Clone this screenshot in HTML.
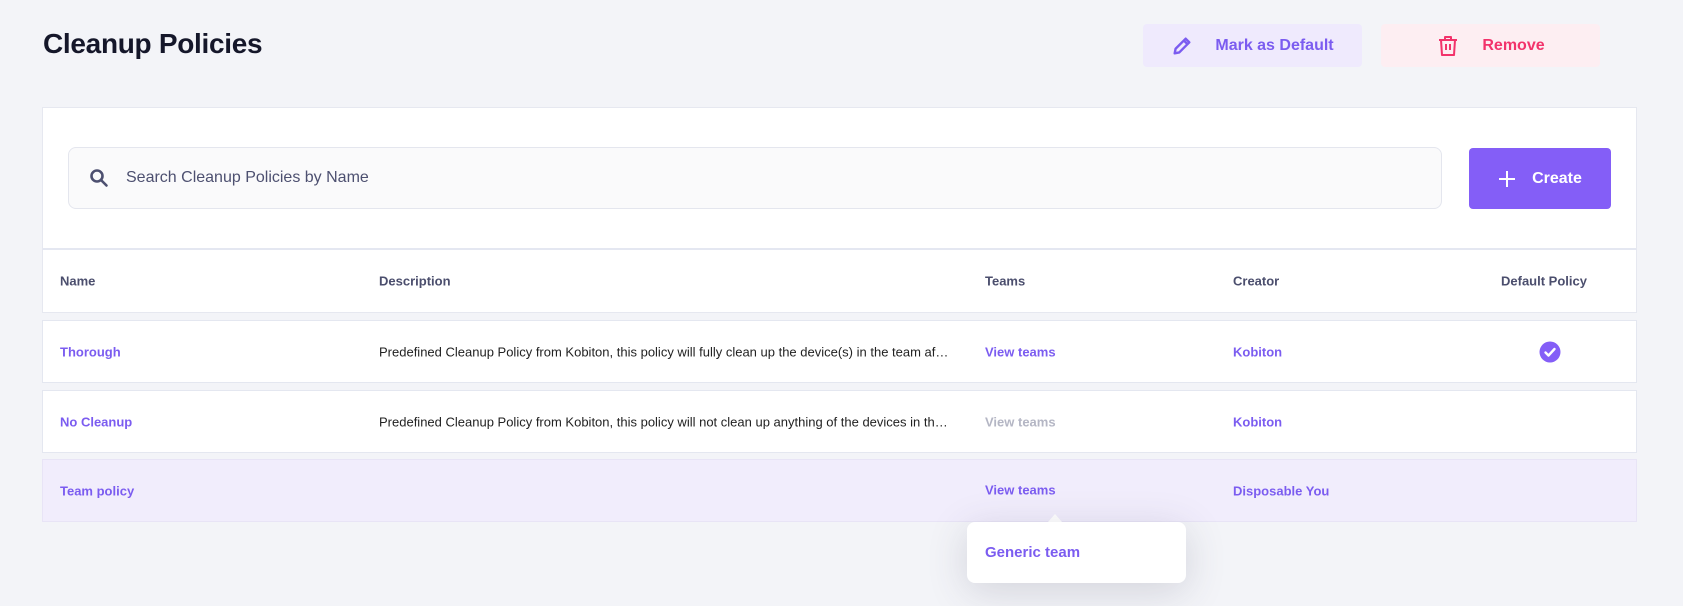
<!DOCTYPE html>
<html><head><meta charset="utf-8"><style>
*{box-sizing:border-box;margin:0;padding:0}
body{width:1683px;height:606px;background:#f3f4f8;font-family:"Liberation Sans",sans-serif;position:relative;overflow:hidden}
.abs{position:absolute}
h1{position:absolute;left:43px;top:28px;font-size:28px;font-weight:bold;color:#15172a;letter-spacing:-0.3px}
.btn{position:absolute;top:24px;height:43px;border-radius:4px;display:flex;align-items:center;justify-content:center;font-size:16px;font-weight:bold;gap:22px}
.card{position:absolute;left:42px;top:107px;width:1595px;height:143px;background:#fff;border:1px solid #e6e8f0;border-bottom:2px solid #e4e7f1}
.search{position:absolute;left:68px;top:147px;width:1374px;height:62px;background:#fafafb;border:1px solid #e4e6ee;border-radius:8px}
.search span{position:absolute;left:57px;top:21px;font-size:16px;color:#4d5070}
.create{position:absolute;left:1469px;top:148px;width:142px;height:61px;background:#845ef7;border-radius:4px;color:#fff;font-weight:bold;font-size:16px;display:flex;align-items:center;justify-content:center;gap:16px}
.hdr{position:absolute;left:42px;top:250px;width:1595px;height:63px;background:#fff;border:1px solid #e6e8f0;border-top:none}
.row{position:absolute;left:42px;width:1595px;height:63px;background:#fff;border:1px solid #e4e7f0}
.c{position:absolute;top:50%;transform:translateY(-50%);font-size:13px;white-space:nowrap}
.h{font-weight:bold;color:#4b4e6d}
.p{color:#7b5cf0;font-weight:bold}
.d{color:#222;width:570px;overflow:hidden;text-overflow:ellipsis}
</style></head><body>
<h1>Cleanup Policies</h1>
<div class="btn" style="left:1143px;width:219px;background:#efeafd;color:#7b5cf0">
<svg width="22" height="22" viewBox="0 0 24 24" fill="none" stroke="#7b5cf0" stroke-width="2.6" stroke-linejoin="round"><path d="M4 20l1-5L16 4l4 4L9 19z"/><path d="M14 6l4 4"/></svg>Mark as Default</div>
<div class="btn" style="left:1381px;width:219px;background:#fdeef2;color:#f2336b">
<svg width="24" height="24" viewBox="0 0 24 24" fill="none" stroke="#f2336b" stroke-width="2" stroke-linejoin="round"><path d="M3 6h18M9 6V3h6v3M5 6l1 15h12l1-15M10 10v6M14 10v6"/></svg>Remove</div>
<div class="card"></div>
<div class="search"><svg class="abs" style="left:20px;top:20px" width="20" height="20" viewBox="0 0 20 20" fill="none" stroke="#4d5070" stroke-width="2.6"><circle cx="8" cy="8" r="5.5"/><path d="M12 12l5.5 5.5" stroke-linecap="round"/></svg><span>Search Cleanup Policies by Name</span></div>
<div class="create"><svg width="18" height="18" viewBox="0 0 18 18" stroke="#fff" stroke-width="2"><path d="M9 1v16M1 9h16"/></svg>Create</div>
<div class="hdr">
<span class="c h" style="left:17px">Name</span>
<span class="c h" style="left:336px">Description</span>
<span class="c h" style="left:942px">Teams</span>
<span class="c h" style="left:1190px">Creator</span>
<span class="c h" style="left:1458px">Default Policy</span>
</div>
<div class="row" style="top:320px">
<span class="c p" style="left:17px">Thorough</span>
<span class="c d" style="left:336px">Predefined Cleanup Policy from Kobiton, this policy will fully clean up the device(s) in the team after each session</span>
<span class="c p" style="left:942px">View teams</span>
<span class="c p" style="left:1190px">Kobiton</span>
<svg class="abs" style="left:1496px;top:20px" width="22" height="22" viewBox="0 0 22 22"><circle cx="11" cy="11" r="10.5" fill="#845ef7"/><path d="M6.5 11.5l3 3 6-6.5" fill="none" stroke="#fff" stroke-width="2.4" stroke-linecap="round" stroke-linejoin="round"/></svg>
</div>
<div class="row" style="top:390px">
<span class="c p" style="left:17px">No Cleanup</span>
<span class="c d" style="left:336px">Predefined Cleanup Policy from Kobiton, this policy will not clean up anything of the devices in the team</span>
<span class="c" style="left:942px;color:#b4b6c4;font-weight:bold">View teams</span>
<span class="c p" style="left:1190px">Kobiton</span>
</div>
<div class="row" style="top:459px;background:#f1edfc;border-color:#e8e4f6">
<span class="c p" style="left:17px">Team policy</span>
<span class="c p" style="left:942px;top:30px">View teams</span>
<span class="c p" style="left:1190px">Disposable You</span>
</div>
<div class="abs" style="left:1048px;top:514px;width:0;height:0;border-left:7px solid transparent;border-right:7px solid transparent;border-bottom:8px solid #fff"></div>
<div class="abs" style="left:967px;top:522px;width:219px;height:61px;background:#fff;border-radius:8px;box-shadow:0 8px 40px rgba(60,60,90,0.18)"><span class="abs" style="left:18px;top:22px;font-size:15px;color:#7b5cf0;font-weight:bold">Generic team</span></div>
</body></html>
